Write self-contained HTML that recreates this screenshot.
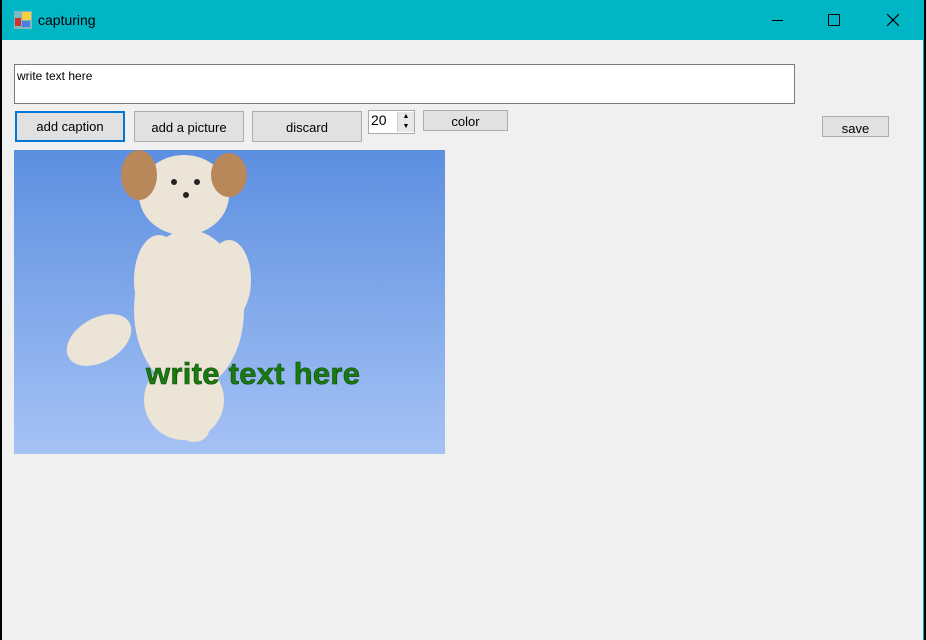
<!DOCTYPE html>
<html><head><style>
body{margin:0;width:926px;height:640px;background:#000;position:relative;overflow:hidden;font-family:"Liberation Sans",sans-serif}
.win{position:absolute;left:2px;top:0;width:921px;height:640px;background:#f0f0f0;border-right:1px solid #00b4c4}
.tb{position:absolute;left:0;top:0;right:0;height:40px;background:#00b6c4}
.btn{position:absolute;background:#e1e1e1;border:1px solid #adadad;font-size:13px;text-align:center;box-sizing:border-box;color:#000}
</style></head><body>
<div class="win">
<div class="tb">
 <svg style="position:absolute;left:12px;top:11px" width="18" height="18"><rect x="0" y="0" width="18" height="18" fill="#7fb8c0"/><rect x="8" y="1" width="9" height="8" fill="#f5d040"/><rect x="1" y="7" width="6" height="8" fill="#d03030"/><rect x="8" y="10" width="8" height="6" fill="#4a7ee0"/></svg>
 <div style="position:absolute;left:36px;top:12px;font-size:14px;color:#000">capturing</div>
 <div style="position:absolute;left:770px;top:20px;width:11px;height:1px;background:#000"></div>
 <div style="position:absolute;left:826px;top:14px;width:10px;height:10px;border:1px solid #000"></div>
 <svg style="position:absolute;left:885px;top:14px" width="12" height="12"><path d="M0 0L12 12M12 0L0 12" stroke="#000" stroke-width="1.2"/></svg>
</div>
<div style="position:absolute;left:12px;top:64px;width:781px;height:40px;background:#fff;border:1px solid #7a7a7a;box-sizing:border-box;font-size:12px;padding:4px 2px">write text here</div>
<div class="btn" style="left:13px;top:111px;width:110px;height:31px;border:2px solid #0078d7;line-height:27px">add caption</div>
<div class="btn" style="left:132px;top:111px;width:110px;height:31px;line-height:31px">add a picture</div>
<div class="btn" style="left:250px;top:111px;width:110px;height:31px;line-height:31px">discard</div>
<div style="position:absolute;left:366px;top:110px;width:47px;height:24px;background:#fff;border:1px solid #aaa;box-sizing:border-box;font-size:14px;padding:1px 2px">20</div>
<div style="position:absolute;left:395px;top:112px;width:16px;height:20px;background:#e8e8e8;border-left:1px solid #ccc;font-size:7px;line-height:10px;text-align:center">▲<br>▼</div>
<div class="btn" style="left:421px;top:110px;width:85px;height:21px;line-height:21px">color</div>
<div class="btn" style="left:820px;top:116px;width:67px;height:21px;line-height:23px">save</div>
<div style="position:absolute;left:12px;top:150px;width:431px;height:304px;background:linear-gradient(#5c8fe0,#a6c2f5);overflow:hidden">
 <svg width="431" height="304" style="position:absolute;left:0;top:0">
  <g fill="#ece4d6">
   <ellipse cx="170" cy="45" rx="45" ry="40"/>
   <ellipse cx="175" cy="160" rx="55" ry="80"/>
   <ellipse cx="170" cy="250" rx="40" ry="40"/>
   <ellipse cx="85" cy="190" rx="35" ry="22" transform="rotate(-30 85 190)"/>
   <ellipse cx="145" cy="130" rx="25" ry="45"/>
   <ellipse cx="215" cy="130" rx="22" ry="40"/>
   <ellipse cx="180" cy="280" rx="15" ry="12"/>
  </g>
  <ellipse cx="125" cy="25" rx="18" ry="25" fill="#b8875a"/>
  <ellipse cx="215" cy="25" rx="18" ry="22" fill="#b8875a"/>
  <circle cx="160" cy="32" r="3" fill="#222"/><circle cx="183" cy="32" r="3" fill="#222"/>
  <circle cx="172" cy="45" r="3" fill="#222"/>
  <text x="132" y="234" font-family="Liberation Sans" font-weight="bold" font-size="31" textLength="214" fill="#1a7a10" stroke="#0b4a08" stroke-width="0.6">write text here</text>
 </svg>
</div>
</div>
</body></html>
